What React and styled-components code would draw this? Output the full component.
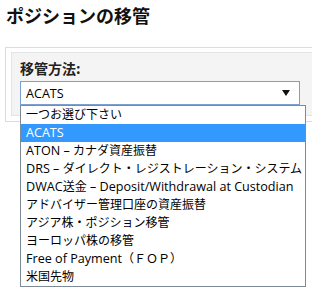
import React from "react";
import styled, { createGlobalStyle } from "styled-components";

const Global = createGlobalStyle`
  html, body { margin: 0; padding: 0; background: #fff; overflow: hidden; }
  body { font-family: "Open Sans", "Noto Sans CJK JP", sans-serif; color: #000; }
`;

const Page = styled.div`
  width: 312px;
  height: 297px;
  position: relative;
  overflow: hidden;
`;

const Title = styled.h1`
  margin: 0;
  padding: 3px 0 0 6px;
  height: 47px;
  box-sizing: border-box;
  font-size: 18px;
  line-height: 24px;
  font-weight: bold;
  font-family: "Noto Sans CJK JP", sans-serif;
  color: #111;
`;

const Outer = styled.div`
  margin-left: 5px;
  width: 330px;
  border: 1px solid #dcdcdc;
  padding: 4px 5px 5px;
  box-sizing: border-box;
`;

const Inner = styled.div`
  background: #f4f4f4;
  border: 1px solid #e4e4e4;
  padding: 6px 8px 10px;
  display: flex;
  flex-direction: column;
  gap: 4px;
`;

const Label = styled.div`
  font-size: 14px;
  line-height: 18px;
  font-weight: bold;
  font-family: "Noto Sans CJK JP", sans-serif;
  color: #222;
`;

const SelectWrap = styled.div`
  position: relative;
  width: 280px;
`;

const SelectBox = styled.div`
  height: 24px;
  box-sizing: border-box;
  border: 1px solid #7b9fd2;
  background: #fff;
  display: flex;
  align-items: center;
  justify-content: space-between;
  padding: 0 9px 0 5px;
  font-size: 12.6px;
`;

const List = styled.ul`
  position: absolute;
  top: 100%;
  left: 0;
  width: 286px;
  margin: 0;
  padding: 0;
  list-style: none;
  background: #fff;
  border: 1px solid #7d8a97;
  box-sizing: border-box;
  z-index: 2;
`;

const Item = styled.li`
  height: 18px;
  line-height: 18px;
  padding-left: 5px;
  font-size: 12px;
  white-space: nowrap;
  background: ${(p) => (p.$active ? "#3399ff" : "transparent")};
  color: ${(p) => (p.$active ? "#fff" : "#000")};
`;

const Latin = styled.span`
  font-size: 12.6px;
`;

const options = [
  "一つお選び下さい",
  "ACATS",
  "ATON – カナダ資産振替",
  "DRS – ダイレクト・レジストレーション・システム",
  "DWAC送金 – Deposit/Withdrawal at Custodian",
  "アドバイザー管理口座の資産振替",
  "アジア株・ポジション移管",
  "ヨーロッパ株の移管",
  "Free of Payment（ＦＯＰ）",
  "米国先物",
];

function renderRuns(text) {
  const parts = text.match(/[\x20-\x7e–]+|[^\x20-\x7e–]+/g) || [];
  return parts.map((p, i) =>
    /^[\x20-\x7e–]+$/.test(p) ? <Latin key={i}>{p}</Latin> : <span key={i}>{p}</span>
  );
}

export default function App() {
  return (
    <Page>
      <Global />
      <Title>ポジションの移管</Title>
      <Outer>
        <Inner>
          <Label>移管方法:</Label>
          <SelectWrap>
            <SelectBox>
              <span>ACATS</span>
              <svg width="8" height="6" viewBox="0 0 8 6">
                <path d="M0 0 H8 L4 6 Z" fill="#111" />
              </svg>
            </SelectBox>
            <List>
              {options.map((o, i) => (
                <Item key={o} $active={i === 1}>
                  {renderRuns(o)}
                </Item>
              ))}
            </List>
          </SelectWrap>
        </Inner>
      </Outer>
    </Page>
  );
}
